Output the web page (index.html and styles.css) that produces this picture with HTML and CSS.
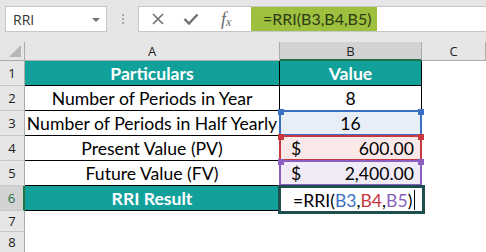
FILE: index.html
```html
<!DOCTYPE html>
<html lang="en">
<head>
  <meta charset="UTF-8">
  <title>RRI Sheet</title>
  <link rel="stylesheet" href="styles.css">
</head>
<body>
  <div class="toolbar">
    <div class="name-box">
      <span>RRI</span>
      <span class="drop"></span>
    </div>
    <div class="dots"><i></i><i></i><i></i></div>
    <div class="formula-box">
      <div class="icons">
        <svg width="14" height="14" viewBox="0 0 14 14"><path d="M2 2 L12 12 M12 2 L2 12" stroke="#707070" stroke-width="1.6" fill="none"/></svg>
        <svg width="16" height="14" viewBox="0 0 16 14"><path d="M1.5 7 L6 11.5 L14.5 2.5" stroke="#707070" stroke-width="2.4" fill="none"/></svg>
        <span class="fx">f<sub>x</sub></span>
      </div>
      <div class="formula-text">=RRI(B3,B4,B5)</div>
    </div>
  </div>

  <div class="sheet">
    <div class="corner"><span class="tri"></span></div>
    <div class="col-head">A</div>
    <div class="col-head active">B</div>
    <div class="col-head">C</div>

    <div class="row-head">1</div>
    <div class="cell title">Particulars</div>
    <div class="cell title last">Value</div>
    <div class="cell empty"></div>

    <div class="row-head">2</div>
    <div class="cell">Number of Periods in Year</div>
    <div class="cell last">8</div>
    <div class="cell empty"></div>

    <div class="row-head">3</div>
    <div class="cell">Number of Periods in Half Yearly</div>
    <div class="cell last ref ref-blue">16<b class="h tl"></b><b class="h tr"></b></div>
    <div class="cell empty"></div>

    <div class="row-head">4</div>
    <div class="cell">Present Value (PV)</div>
    <div class="cell last ref ref-red money"><span>$</span><span>600.00</span><b class="h tl"></b><b class="h tr"></b></div>
    <div class="cell empty"></div>

    <div class="row-head">5</div>
    <div class="cell">Future Value (FV)</div>
    <div class="cell last ref ref-purple money"><span>$</span><span>2,400.00</span><b class="h tl"></b><b class="h tr"></b></div>
    <div class="cell empty"></div>

    <div class="row-head active">6</div>
    <div class="cell title">RRI Result</div>
    <div class="cell last editing">=RRI(<span class="c-blue">B3</span>,<span class="c-red">B4</span>,<span class="c-purple">B5</span>)<span class="caret"></span></div>
    <div class="cell empty"></div>

    <div class="row-head short">7</div>
    <div class="cell empty plain"></div>
    <div class="cell empty plain"></div>
    <div class="cell empty"></div>

    <div class="row-head short">8</div>
    <div class="cell empty plain"></div>
    <div class="cell empty plain"></div>
    <div class="cell empty"></div>
  </div>
</body>
</html>
```

FILE: styles.css
```css
* {
  box-sizing: border-box;
}

body {
  margin: 0;
  width: 486px;
  height: 252px;
  overflow: hidden;
  background: #ffffff;
  font-family: Lato, "Open Sans", sans-serif;
}

/* formula bar */
.toolbar {
  display: flex;
  align-items: flex-start;
  height: 42px;
  padding-top: 6px;
  padding-left: 5px;
  background: #e6e6e6;
}

.name-box {
  display: flex;
  align-items: center;
  justify-content: space-between;
  width: 102px;
  height: 26px;
  padding: 0 6px 0 7px;
  background: #fff;
  border: 1px solid #c6c6c6;
  font-family: "Open Sans", sans-serif;
  font-size: 14px;
  color: #333;
}

.drop {
  width: 0;
  height: 0;
  border-left: 4px solid transparent;
  border-right: 4px solid transparent;
  border-top: 4px solid #707070;
  margin-top: 1px;
}

.dots {
  display: flex;
  flex-direction: column;
  gap: 2px;
  width: 31px;
  padding-top: 8px;
  align-items: center;
}

.dots i {
  display: block;
  width: 2px;
  height: 2px;
  background: #a8a8a8;
}

.formula-box {
  display: flex;
  flex: 1;
  height: 26px;
  background: #fff;
  border: 1px solid #c6c6c6;
  border-right: none;
}

.icons {
  display: flex;
  align-items: center;
  width: 112px;
  padding-left: 12px;
  gap: 18px;
}

.fx {
  font-family: "Liberation Serif", serif;
  font-style: italic;
  font-size: 18px;
  color: #6a6a6a;
  margin-left: 4px;
}

.fx sub {
  font-size: 12px;
  vertical-align: baseline;
  position: relative;
  top: 1px;
}

.formula-text {
  width: 126px;
  height: 24px;
  padding-left: 12px;
  background: #9dc03e;
  font-size: 16px;
  line-height: 24px;
  color: #2f3a14;
}

/* grid */
.sheet {
  display: grid;
  grid-template-columns: 25px 255px 142px 1fr;
  grid-template-rows: 19px repeat(6, 25px) 21px 21px;
  font-size: 17.6px;
}

.corner {
  position: relative;
  background: #e6e6e6;
  border-right: 1px solid #ababab;
  border-bottom: 1px solid #ababab;
}

.tri {
  position: absolute;
  right: 3px;
  bottom: 3px;
  width: 0;
  height: 0;
  border-left: 12px solid transparent;
  border-bottom: 12px solid #b7b7b7;
}

.col-head {
  display: flex;
  align-items: center;
  justify-content: center;
  background: #e6e6e6;
  border-right: 1px solid #ababab;
  border-bottom: 1px solid #ababab;
  font-family: "Open Sans", sans-serif;
  font-size: 13px;
  color: #222;
}

.col-head.active {
  background: #d2d2d2;
  border-bottom: 2px solid #217346;
}

.row-head {
  display: flex;
  align-items: center;
  justify-content: center;
  background: #e6e6e6;
  border-right: 1px solid #ababab;
  border-bottom: 1px solid #c8c8c8;
  font-family: "Open Sans", sans-serif;
  font-size: 13px;
  color: #222;
}

.row-head.active {
  background: #d2d2d2;
  border-right: 2px solid #217346;
  color: #217346;
}

.cell {
  position: relative;
  display: flex;
  align-items: center;
  justify-content: center;
  padding-top: 1px;
  border-right: 1px solid #000;
  border-bottom: 1px solid #000;
  color: #000;
  white-space: nowrap;
}

.cell.title {
  background: #11a09a;
  color: #fff;
  font-weight: bold;
}

.cell.empty {
  border: none;
}

.ref {
  border-width: 2px;
  border-style: solid;
  margin: -1px 0 0 -1px;
}

.ref-blue {
  background: #e8eef8;
  border-color: #3b6fc4;
}

.ref-red {
  background: #fbe9e9;
  border-color: #c8383f;
}

.ref-purple {
  background: #f0ebf6;
  border-color: #8a5fbf;
}

.money {
  justify-content: space-between;
  padding: 0 6px 0 10px;
}

.h {
  position: absolute;
  top: -3px;
  width: 6px;
  height: 6px;
}

.h.tl {
  left: -3px;
}

.h.tr {
  right: -4px;
}

.ref-blue .h {
  background: #3b6fc4;
}

.ref-red .h {
  background: #c8383f;
}

.ref-purple .h {
  background: #8a5fbf;
}

.editing {
  justify-content: flex-start;
  padding-left: 12px;
  margin: -1px -3px -3px -2px;
  border: 3px solid #1d4f4f;
  z-index: 1;
  background: #fff;
}

.caret {
  display: inline-block;
  width: 1px;
  height: 20px;
  background: #000;
  margin-left: 2px;
}

.c-blue {
  color: #3b6fc4;
}

.c-red {
  color: #c8383f;
}

.c-purple {
  color: #8a5fbf;
}
```
